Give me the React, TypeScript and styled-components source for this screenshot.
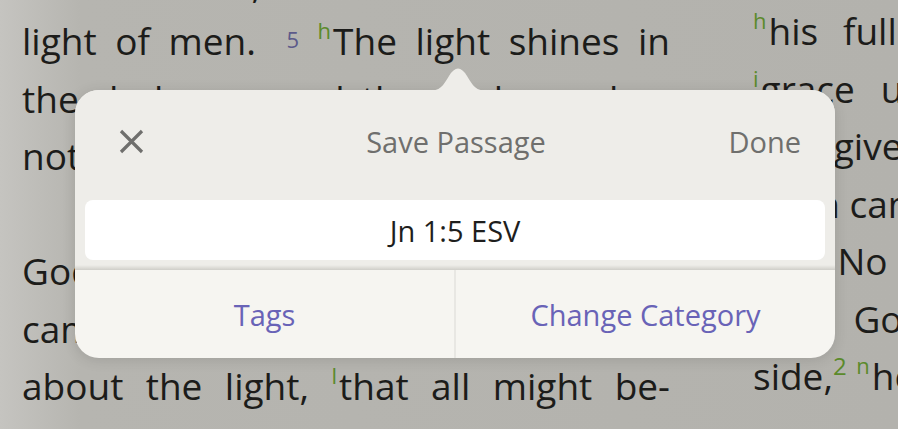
import styled, { createGlobalStyle } from "styled-components";

const GlobalStyle = createGlobalStyle`
  html, body {
    margin: 0;
    padding: 0;
    overflow: hidden;
  }
  body {
    font-family: "Open Sans", "Noto Sans", sans-serif;
  }
`;

const Page = styled.div`
  position: relative;
  width: 898px;
  height: 429px;
  overflow: hidden;
  box-sizing: border-box;
  display: flex;
  align-items: flex-start;
  gap: 83px;
  padding-left: 22px;
  background: linear-gradient(90deg, #c5c4c0 0, #b6b5b0 80px, #b3b2ad 100%);
`;

// the reader is scrolled, so the left page starts half a line above the top
const LeftPage = styled.div`
  flex: 0 0 648px;
  margin-top: -45.5px;
`;

const RightPage = styled.div`
  flex: 0 0 648px;
  padding-top: 2px;
`;

const Line = styled.div<{ $last?: boolean; $indent?: number }>`
  font-size: 37px;
  line-height: 57.5px;
  color: #1c1c1a;
  text-align: ${(p) => (p.$last ? "left" : "justify")};
  text-align-last: ${(p) => (p.$last ? "left" : "justify")};
  text-indent: ${(p) => p.$indent ?? 0}px;
`;

const Verse = styled.span<{ $green?: boolean; $gap?: number }>`
  vertical-align: ${(p) => (p.$green ? 15 : 7)}px;
  font-size: ${(p) => (p.$green ? 24 : 22)}px;
  line-height: 0;
  margin-left: ${(p) => p.$gap ?? 0}px;
  color: ${(p) => (p.$green ? "#5b8a2b" : "#5c5a8a")};
`;

const Note = styled.span`
  vertical-align: 16px;
  font-size: 22px;
  line-height: 0;
  margin-right: 2px;
  color: #5b8a2b;
`;

const Popover = styled.div`
  position: absolute;
  left: 75px;
  top: 90px;
  width: 760px;
  height: 268px;
  display: flex;
  flex-direction: column;
  border-radius: 24px;
  background: #f6f5f1;
  box-shadow: 0 2px 14px rgba(0, 0, 0, 0.12);
`;

const Arrow = styled.svg`
  position: absolute;
  left: 353px;
  top: -26px;
`;

const Header = styled.div`
  height: 102px;
  display: grid;
  grid-template-columns: 1fr auto 1fr;
  align-items: center;
  padding: 0 34px 0 44px;
  border-radius: 24px 24px 0 0;
  background: #eeede9;
  font-size: 29px;
  color: #6f6f6d;
`;

const Close = styled.div`
  display: flex;
  align-items: center;
`;

const Title = styled.div`
  text-align: center;
  padding-right: 8px;
`;

const Done = styled.div`
  text-align: right;
`;

const FieldWrap = styled.div`
  padding: 8px 10px 10px;
  background: linear-gradient(
    to bottom,
    #eeede9 0,
    #eeede9 calc(100% - 5px),
    #dcdbd6 calc(100% - 2px),
    #cfcec9 100%
  );
`;

const Field = styled.div`
  height: 60px;
  border-radius: 8px;
  background: #ffffff;
  display: flex;
  align-items: center;
  justify-content: center;
  font-size: 29px;
  color: #1e1e1d;
`;

const Actions = styled.div`
  flex: 1;
  display: flex;
`;

const Action = styled.div<{ $divider?: boolean }>`
  flex: 1;
  display: flex;
  align-items: center;
  justify-content: center;
  font-size: 29px;
  color: #6963b7;
  border-left: ${(p) => (p.$divider ? "2px solid #e8e7e3" : "none")};
`;

export default function App() {
  return (
    <>
      <GlobalStyle />
      <Page>
        <LeftPage>
          <Line>him was life, and the life was the</Line>
          <Line>
            light of men. <Verse $gap={12}>5</Verse> <Note>h</Note>The light
            shines in
          </Line>
          <Line>the darkness, and the darkness has</Line>
          <Line $last>not overcome it.</Line>
          <Line $indent={60}>
            <Verse>6</Verse> There was a man sent from
          </Line>
          <Line>
            God, whose name was John. <Verse>7</Verse> He
          </Line>
          <Line>came as a witness, to bear witness</Line>
          <Line>
            about the light, <Note>l</Note>that all might be-
          </Line>
          <Line $last>lieve through him.</Line>
        </LeftPage>
        <RightPage>
          <Line>
            <Note>h</Note>his fullness we have all received,
          </Line>
          <Line>
            <Note>i</Note>grace upon grace. <Verse>17</Verse> For the law
          </Line>
          <Line>was given through Moses; grace and</Line>
          <Line $last>truth came through Jesus Christ.</Line>
          <Line $indent={44}>
            <Verse>18</Verse> No one has ever seen God; the
          </Line>
          <Line>only God, who is at the Father's</Line>
          <Line $last>
            side,<Verse $green>2</Verse> <Note>n</Note>he has made him known.
          </Line>
        </RightPage>

        <Popover>
          <Arrow width="60" height="27" viewBox="0 0 60 27">
            <path
              d="M0 27 C 12 27 15 22 21 12 Q 30 -3 39 12 C 45 22 48 27 60 27 Z"
              fill="#eeede9"
            />
          </Arrow>
          <Header>
            <Close>
              <svg width="25" height="25" viewBox="0 0 25 25">
                <path
                  d="M2 2 L23 23 M23 2 L2 23"
                  stroke="#6f6f6d"
                  strokeWidth="3.2"
                />
              </svg>
            </Close>
            <Title>Save Passage</Title>
            <Done>Done</Done>
          </Header>
          <FieldWrap>
            <Field>Jn 1:5 ESV</Field>
          </FieldWrap>
          <Actions>
            <Action>Tags</Action>
            <Action $divider>Change Category</Action>
          </Actions>
        </Popover>
      </Page>
    </>
  );
}
